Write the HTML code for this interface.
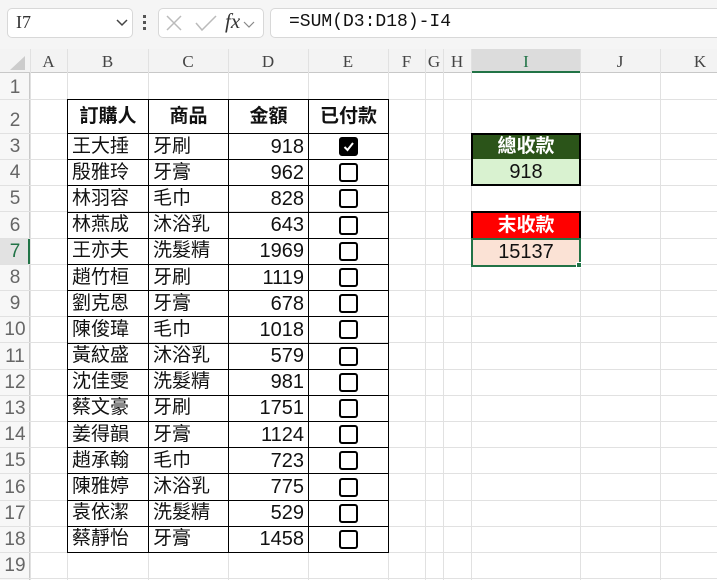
<!DOCTYPE html>
<html><head><meta charset="utf-8"><style>
*{margin:0;padding:0;box-sizing:border-box}
body{width:717px;height:580px;overflow:hidden;background:#fff;position:relative;font-family:"Liberation Sans","Noto Sans CJK TC",sans-serif}
.a{position:absolute}
.vl{position:absolute;top:49px;bottom:0;width:1px;background:#e1e1e1}
.hl{position:absolute;left:0;right:0;height:1px;background:#e1e1e1}
.ch{position:absolute;top:49px;height:24px;line-height:26px;text-align:center;font-family:"Liberation Serif",serif;font-size:17px;color:#444}
.rh{position:absolute;left:0;width:30px;text-align:center;font-size:19px;color:#666;font-family:"Liberation Sans",sans-serif}
table{position:absolute;left:67px;top:99px;border-collapse:collapse;font-size:19px;color:#111}
td{border:1px solid #000;height:26.19px;padding:0 4px;line-height:22px;white-space:nowrap}
tr.h td{height:34px;text-align:center;font-weight:bold;font-size:19px}
td.n{text-align:right;font-size:20px}
td.c{text-align:center}
.cb{display:inline-block;width:19px;height:19px;border:2px solid #000;border-radius:3px;vertical-align:middle}
.cb.k{background:#000;position:relative}
</style></head><body>
<div class="a" style="left:0;top:0;width:717px;height:49px;background:#f5f5f5"></div>
<div class="a" style="left:7px;top:8px;width:126px;height:30px;background:#fff;border:1px solid #d8d8d8;border-radius:5px"></div>
<div class="a" style="left:16px;top:12px;font-family:'Liberation Serif',serif;font-size:18px;color:#333">I7</div>
<svg class="a" style="left:116px;top:19px" width="12" height="8"><path d="M1 1 L6 6 L11 1" stroke="#444" stroke-width="1.5" fill="none"/></svg>
<div class="a" style="left:143px;top:15px;width:3px;height:3px;background:#555"></div>
<div class="a" style="left:143px;top:21px;width:3px;height:3px;background:#555"></div>
<div class="a" style="left:143px;top:27px;width:3px;height:3px;background:#555"></div>
<div class="a" style="left:158px;top:8px;width:106px;height:30px;background:#fff;border:1px solid #d8d8d8;border-radius:5px"></div>
<svg class="a" style="left:164px;top:13px" width="100" height="22"><path d="M3 3 L17 17 M17 3 L3 17" stroke="#bbb" stroke-width="1.5"/><path d="M32 10 L38 17 L52 3" stroke="#bbb" stroke-width="1.5" fill="none"/><path d="M80 9 L85 14 L90 9" stroke="#888" stroke-width="1.2" fill="none"/></svg>
<div class="a" style="left:225px;top:9px;font-family:'Liberation Serif',serif;font-style:italic;font-size:21px;color:#333">fx</div>
<div class="a" style="left:270px;top:8px;width:460px;height:30px;background:#fff;border:1px solid #d8d8d8;border-radius:5px"></div>
<div class="a" style="left:289px;top:12px;font-family:'Liberation Mono',monospace;font-size:18px;color:#111">=SUM(D3:D18)-I4</div>
<div class="a" style="left:0;top:49px;width:717px;height:24px;background:#f3f3f3;border-bottom:1px solid #c8c8c8"></div>
<div class="a" style="left:0;top:73px;width:30px;height:507px;background:#f7f7f7;border-right:1px solid #c8c8c8"></div>
<div class="a" style="left:471px;top:49px;width:110px;height:24px;background:#dcdcdc;border-bottom:2px solid #217346"></div>
<div class="a" style="left:0;top:238px;width:30px;height:26px;background:#e2e2e2;border-right:2px solid #217346"></div>
<svg class="a" style="left:8px;top:55px" width="18" height="16"><path d="M17 1 L17 15 L2 15 Z" fill="#ccc"/></svg>
<div class="vl" style="left:30px"></div><div class="vl" style="left:67px"></div><div class="vl" style="left:148px"></div><div class="vl" style="left:228px"></div><div class="vl" style="left:308px"></div><div class="vl" style="left:388px"></div><div class="vl" style="left:425px"></div><div class="vl" style="left:443px"></div><div class="vl" style="left:471px"></div><div class="vl" style="left:580px"></div><div class="vl" style="left:660px"></div>
<div class="hl" style="top:99px"></div><div class="hl" style="top:133px"></div><div class="hl" style="top:159px"></div><div class="hl" style="top:185px"></div><div class="hl" style="top:211px"></div><div class="hl" style="top:238px"></div><div class="hl" style="top:264px"></div><div class="hl" style="top:290px"></div><div class="hl" style="top:316px"></div><div class="hl" style="top:342px"></div><div class="hl" style="top:369px"></div><div class="hl" style="top:395px"></div><div class="hl" style="top:421px"></div><div class="hl" style="top:447px"></div><div class="hl" style="top:473px"></div><div class="hl" style="top:500px"></div><div class="hl" style="top:526px"></div><div class="hl" style="top:552px"></div><div class="hl" style="top:578px"></div>
<div class="ch" style="left:30px;width:37px">A</div><div class="ch" style="left:67px;width:81px">B</div><div class="ch" style="left:148px;width:80px">C</div><div class="ch" style="left:228px;width:80px">D</div><div class="ch" style="left:308px;width:80px">E</div><div class="ch" style="left:388px;width:37px">F</div><div class="ch" style="left:425px;width:18px">G</div><div class="ch" style="left:443px;width:28px">H</div><div class="ch" style="left:471px;width:110px;color:#217346">I</div><div class="ch" style="left:580px;width:80px">J</div><div class="ch" style="left:660px;width:80px">K</div>
<div class="rh" style="top:77px">1</div><div class="rh" style="top:110px">2</div><div class="rh" style="top:136px">3</div><div class="rh" style="top:162px">4</div><div class="rh" style="top:188px">5</div><div class="rh" style="top:215px">6</div><div class="rh" style="top:241px;color:#217346">7</div><div class="rh" style="top:267px">8</div><div class="rh" style="top:293px">9</div><div class="rh" style="top:319px">10</div><div class="rh" style="top:346px">11</div><div class="rh" style="top:372px">12</div><div class="rh" style="top:398px">13</div><div class="rh" style="top:424px">14</div><div class="rh" style="top:450px">15</div><div class="rh" style="top:477px">16</div><div class="rh" style="top:503px">17</div><div class="rh" style="top:529px">18</div><div class="rh" style="top:555px">19</div>
<table>
<colgroup><col style="width:81px"><col style="width:80px"><col style="width:80px"><col style="width:80px"></colgroup>
<tr class="h"><td>訂購人</td><td>商品</td><td>金額</td><td>已付款</td></tr>
<tr><td>王大捶</td><td>牙刷</td><td class="n">918</td><td class="c"><span class="cb k"><svg style="position:absolute;left:1px;top:1px" width="13" height="13"><path d="M2.5 7 L5.5 10 L11 3" stroke="#fff" stroke-width="2" fill="none"/></svg></span></td></tr>
<tr><td>殷雅玲</td><td>牙膏</td><td class="n">962</td><td class="c"><span class="cb"></span></td></tr>
<tr><td>林羽容</td><td>毛巾</td><td class="n">828</td><td class="c"><span class="cb"></span></td></tr>
<tr><td>林燕成</td><td>沐浴乳</td><td class="n">643</td><td class="c"><span class="cb"></span></td></tr>
<tr><td>王亦夫</td><td>洗髮精</td><td class="n">1969</td><td class="c"><span class="cb"></span></td></tr>
<tr><td>趙竹桓</td><td>牙刷</td><td class="n">1119</td><td class="c"><span class="cb"></span></td></tr>
<tr><td>劉克恩</td><td>牙膏</td><td class="n">678</td><td class="c"><span class="cb"></span></td></tr>
<tr><td>陳俊瑋</td><td>毛巾</td><td class="n">1018</td><td class="c"><span class="cb"></span></td></tr>
<tr><td>黃紋盛</td><td>沐浴乳</td><td class="n">579</td><td class="c"><span class="cb"></span></td></tr>
<tr><td>沈佳雯</td><td>洗髮精</td><td class="n">981</td><td class="c"><span class="cb"></span></td></tr>
<tr><td>蔡文豪</td><td>牙刷</td><td class="n">1751</td><td class="c"><span class="cb"></span></td></tr>
<tr><td>姜得韻</td><td>牙膏</td><td class="n">1124</td><td class="c"><span class="cb"></span></td></tr>
<tr><td>趙承翰</td><td>毛巾</td><td class="n">723</td><td class="c"><span class="cb"></span></td></tr>
<tr><td>陳雅婷</td><td>沐浴乳</td><td class="n">775</td><td class="c"><span class="cb"></span></td></tr>
<tr><td>袁依潔</td><td>洗髮精</td><td class="n">529</td><td class="c"><span class="cb"></span></td></tr>
<tr><td>蔡靜怡</td><td>牙膏</td><td class="n">1458</td><td class="c"><span class="cb"></span></td></tr>
</table>
<div class="a" style="left:471px;top:133px;width:110px;height:53px;border:2px solid #000"></div>
<div class="a" style="left:473px;top:135px;width:106px;height:24px;background:#2b5419;color:#fff;font-weight:bold;font-size:19px;text-align:center;line-height:24px">總收款</div>
<div class="a" style="left:473px;top:159px;width:106px;height:25px;background:#d9f2d0;color:#111;font-size:20px;text-align:center;line-height:26px">918</div>
<div class="a" style="left:471px;top:211px;width:110px;height:30px;border:2px solid #000;border-bottom:none;background:#ff0000;color:#fff;font-weight:bold;font-size:19px;text-align:center;line-height:26px">末收款</div>
<div class="a" style="left:471px;top:238px;width:110px;height:29px;border:2px solid #217346;background:#fbe2d5;color:#111;font-size:20px;text-align:center;line-height:25px">15137</div>
<div class="a" style="left:576px;top:262px;width:6px;height:6px;background:#217346;border:1px solid #fff"></div>
</body></html>
